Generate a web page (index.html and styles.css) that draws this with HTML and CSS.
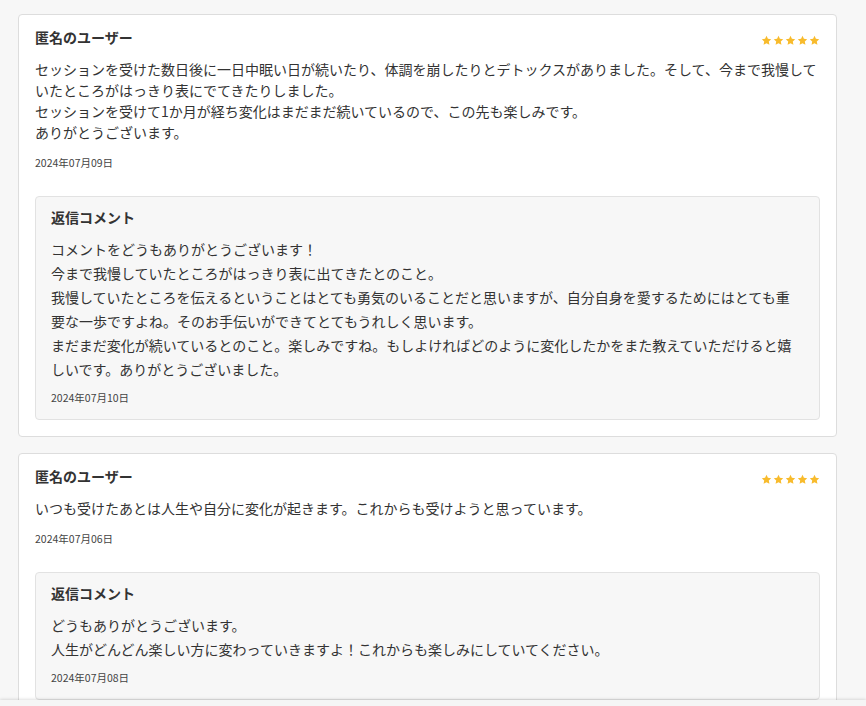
FILE: index.html
```html
<!DOCTYPE html>
<html lang="ja">
<head>
<meta charset="utf-8">
<title>レビュー</title>
<link rel="stylesheet" href="styles.css">
</head>
<body>
<div class="list">
  <div class="card">
    <div class="head">
      <div class="name">匿名のユーザー</div>
      <div class="stars">
        <svg viewBox="0 0 24 24"><path d="M12 1.8l3.1 6.6 7.2.9-5.3 5 1.4 7.1L12 17.9l-6.4 3.5 1.4-7.1-5.3-5 7.2-.9z"/></svg>
        <svg viewBox="0 0 24 24"><path d="M12 1.8l3.1 6.6 7.2.9-5.3 5 1.4 7.1L12 17.9l-6.4 3.5 1.4-7.1-5.3-5 7.2-.9z"/></svg>
        <svg viewBox="0 0 24 24"><path d="M12 1.8l3.1 6.6 7.2.9-5.3 5 1.4 7.1L12 17.9l-6.4 3.5 1.4-7.1-5.3-5 7.2-.9z"/></svg>
        <svg viewBox="0 0 24 24"><path d="M12 1.8l3.1 6.6 7.2.9-5.3 5 1.4 7.1L12 17.9l-6.4 3.5 1.4-7.1-5.3-5 7.2-.9z"/></svg>
        <svg viewBox="0 0 24 24"><path d="M12 1.8l3.1 6.6 7.2.9-5.3 5 1.4 7.1L12 17.9l-6.4 3.5 1.4-7.1-5.3-5 7.2-.9z"/></svg>
      </div>
    </div>
    <p class="body">セッションを受けた数日後に一日中眠い日が続いたり、体調を崩したりとデトックスがありました。そして、今まで我慢していたところがはっきり表にでてきたりしました。<br>セッションを受けて1か月が経ち変化はまだまだ続いているので、この先も楽しみです。<br>ありがとうございます。</p>
    <div class="date">2024年07月09日</div>
    <div class="reply">
      <div class="reply-title">返信コメント</div>
      <p class="reply-body">コメントをどうもありがとうございます！<br>今まで我慢していたところがはっきり表に出てきたとのこと。<br>我慢していたところを伝えるということはとても勇気のいることだと思いますが、自分自身を愛するためにはとても重要な一歩ですよね。そのお手伝いができてとてもうれしく思います。<br>まだまだ変化が続いているとのこと。楽しみですね。もしよければどのように変化したかをまた教えていただけると嬉しいです。ありがとうございました。</p>
      <div class="date reply-date">2024年07月10日</div>
    </div>
  </div>

  <div class="card">
    <div class="head">
      <div class="name">匿名のユーザー</div>
      <div class="stars">
        <svg viewBox="0 0 24 24"><path d="M12 1.8l3.1 6.6 7.2.9-5.3 5 1.4 7.1L12 17.9l-6.4 3.5 1.4-7.1-5.3-5 7.2-.9z"/></svg>
        <svg viewBox="0 0 24 24"><path d="M12 1.8l3.1 6.6 7.2.9-5.3 5 1.4 7.1L12 17.9l-6.4 3.5 1.4-7.1-5.3-5 7.2-.9z"/></svg>
        <svg viewBox="0 0 24 24"><path d="M12 1.8l3.1 6.6 7.2.9-5.3 5 1.4 7.1L12 17.9l-6.4 3.5 1.4-7.1-5.3-5 7.2-.9z"/></svg>
        <svg viewBox="0 0 24 24"><path d="M12 1.8l3.1 6.6 7.2.9-5.3 5 1.4 7.1L12 17.9l-6.4 3.5 1.4-7.1-5.3-5 7.2-.9z"/></svg>
        <svg viewBox="0 0 24 24"><path d="M12 1.8l3.1 6.6 7.2.9-5.3 5 1.4 7.1L12 17.9l-6.4 3.5 1.4-7.1-5.3-5 7.2-.9z"/></svg>
      </div>
    </div>
    <p class="body">いつも受けたあとは人生や自分に変化が起きます。これからも受けようと思っています。</p>
    <div class="date">2024年07月06日</div>
    <div class="reply">
      <div class="reply-title">返信コメント</div>
      <p class="reply-body">どうもありがとうございます。<br>人生がどんどん楽しい方に変わっていきますよ！これからも楽しみにしていてください。</p>
      <div class="date reply-date">2024年07月08日</div>
    </div>
  </div>
</div>
<div class="bottom-bar"></div>
</body>
</html>
```

FILE: styles.css
```css
html, body {
  margin: 0;
  padding: 0;
  background: #f7f7f7;
}
body {
  font-family: "Noto Sans CJK JP", "Noto Sans", sans-serif;
  color: #333;
  font-size: 14px;
}
.list {
  display: flex;
  flex-direction: column;
  gap: 16px;
  padding: 14px 29px 40px 18px;
}
.card {
  background: #fff;
  border: 1px solid #dddddd;
  border-radius: 4px;
  padding: 12px 16px 16px;
}
.head {
  display: flex;
  justify-content: space-between;
  align-items: center;
}
.name {
  font-weight: bold;
  font-size: 14px;
  line-height: 21px;
}
.stars {
  display: flex;
  gap: 1px;
  margin-top: 6px;
}
.stars svg {
  width: 11px;
  height: 11px;
  fill: #f8bb2c;
}
.body {
  margin: 11px 0 0;
  font-size: 14px;
  line-height: 21px;
}
.date {
  margin-top: 12px;
  font-size: 10.5px;
  line-height: 16px;
  color: #444;
}
.reply {
  margin-top: 25px;
  background: #f7f7f7;
  border: 1px solid #e2e2e2;
  border-radius: 4px;
  padding: 10px 20px 13px 15px;
}
.reply-title {
  font-weight: bold;
  font-size: 14px;
  line-height: 21px;
}
.reply-body {
  margin: 9px 0 0;
  font-size: 14px;
  line-height: 24px;
}
.reply-date {
  margin-top: 9px;
}
.bottom-bar {
  position: fixed;
  left: 0;
  right: 0;
  bottom: 0;
  height: 6px;
  background: #f5f5f5;
  box-shadow: 0 -1px 3px rgba(0, 0, 0, 0.12);
}
```
